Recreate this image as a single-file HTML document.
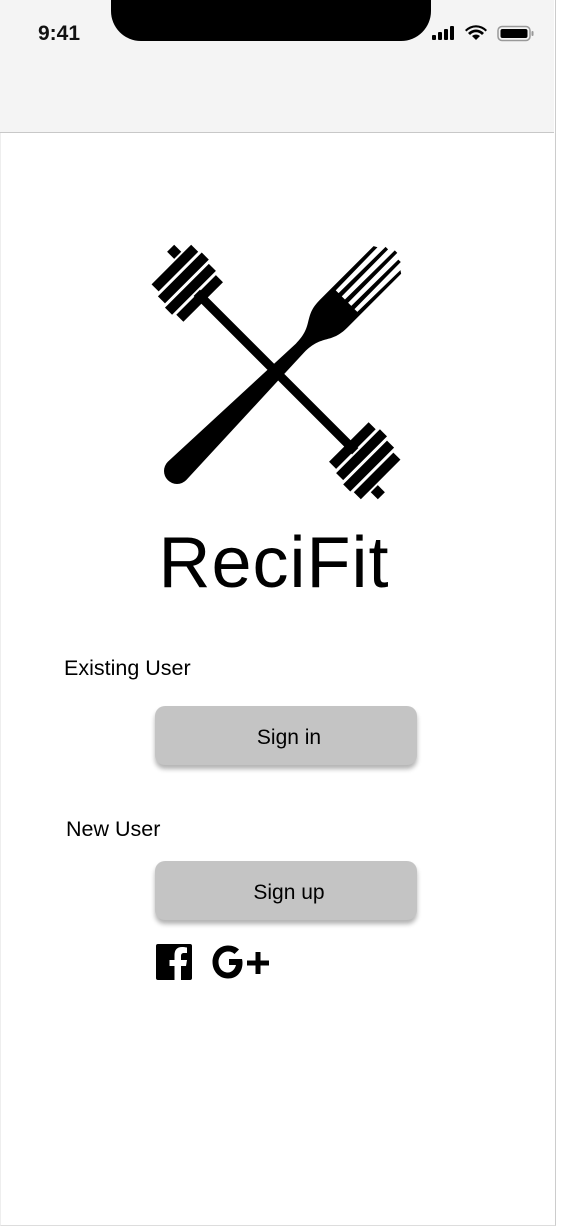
<!DOCTYPE html>
<html><head><meta charset="utf-8"><style>
body{margin:0;width:568px;height:1226px;background:#fff;font-family:"Liberation Sans",sans-serif;position:relative;overflow:hidden}
.frame{position:absolute;left:0;top:0;width:554px;height:1225px;border-right:1px solid #ccc;border-bottom:1px solid #ddd;border-left:1px solid #eee}
.top{position:absolute;left:0;top:0;width:554px;height:132px;background:#f4f4f4;border-bottom:1px solid #c8c8c8}
.notch{position:absolute;left:111px;top:-2px;width:320px;height:43px;background:#000;border-radius:0 0 30px 30px}
.time{position:absolute;left:38px;top:22px;font-size:21px;font-weight:bold;color:#111}
.lbl{position:absolute;font-size:21.5px;color:#000}
.btn{position:absolute;left:155px;width:262px;height:59px;background:#c4c4c4;border-radius:10px;box-shadow:0 4px 5px rgba(0,0,0,.3);font-size:21px;text-align:center;line-height:63px;color:#000;text-indent:6px}
.title{position:absolute;left:0;width:554px;top:522px;text-align:center;font-size:72px;letter-spacing:1px;color:#000;text-indent:-6px}
</style></head><body>
<div class="frame"></div>
<div class="top">
<div class="notch"></div>
<div class="time">9:41</div>
<svg style="position:absolute;left:430px;top:24px" width="105" height="20" viewBox="0 0 105 20">
<rect x="2" y="11" width="4" height="5" rx="1"/><rect x="8" y="8" width="4" height="8" rx="1"/><rect x="14" y="5" width="4" height="11" rx="1"/><rect x="20" y="2" width="4" height="14" rx="1"/>
<path d="M46 16 L42 12 A6 6 0 0 1 50 12 Z"/><path d="M38 9 A11 11 0 0 1 54 9 L52 11 A8 8 0 0 0 40 11 Z"/><path d="M35 6 A15 15 0 0 1 57 6 L55.5 7.5 A13 13 0 0 0 36.5 7.5 Z"/>
<rect x="68" y="2.5" width="32" height="14" rx="4" fill="none" stroke="#999" stroke-width="1.5"/><rect x="70.5" y="5" width="27" height="9" rx="2"/><rect x="101.5" y="7" width="2" height="5" rx="1" fill="#999"/>
</svg>
</div>
<svg style="position:absolute;left:0;top:0" width="568" height="600">
<g transform="translate(276,372) rotate(45)">
<rect x="-112" y="-4.5" width="224" height="9"/>
<rect x="-162" y="-18" width="10" height="10"/>
<rect x="-150" y="-30" width="10" height="56"/><rect x="-137" y="-32" width="10" height="62"/><rect x="-124" y="-29" width="10" height="62"/><rect x="-111" y="-26" width="10" height="56"/>
<rect x="152" y="8" width="10" height="10"/>
<rect x="140" y="-26" width="10" height="56"/><rect x="127" y="-30" width="10" height="62"/><rect x="114" y="-33" width="10" height="62"/><rect x="101" y="-30" width="10" height="56"/>
</g>
<g transform="translate(276,372) rotate(-45)">
<path d="M-140 -13 L34 -6 C60 -6 58 -20 82 -20 L100 -20 L158 -20 L160 -16.5 L100 -15.5 L100 -11.5 L166 -11 L166 -7.5 L100 -7 L100 -2.5 L170 -2 L170 1.5 L100 2 L100 6.5 L166 7 L166 10.5 L100 11 L100 15 L160 16 L158 19 L82 19 C58 19 60 6 34 6 L-140 13 A13 13 0 0 1 -140 -13 Z"/>
</g>
</svg>
<div class="title">ReciFit</div>
<div class="lbl" style="left:64px;top:656px">Existing User</div>
<div class="btn" style="top:706px">Sign in</div>
<div class="lbl" style="left:66px;top:817px">New User</div>
<div class="btn" style="top:861px">Sign up</div>
<svg style="position:absolute;left:156px;top:944px" width="36" height="36" viewBox="0 0 36 36">
<path d="M2 0 H34 A2 2 0 0 1 36 2 V34 A2 2 0 0 1 34 36 H25 V22 H30 L31 16 H25 V12 C25 10 26 9 28 9 H31 V3.5 C29.5 3.3 27.5 3 26 3 C21 3 18.5 6 18.5 11 V16 H13.5 V22 H18.5 V36 H2 A2 2 0 0 1 0 34 V2 A2 2 0 0 1 2 0 Z"/>
</svg>
<svg style="position:absolute;left:212px;top:944px" width="60" height="36" viewBox="0 0 60 36">
<path d="M30 15 H17 V21 H24 C23 25 20 28.5 16 28.5 C10 28.5 6.5 23.5 6.5 18 C6.5 12.5 10.5 7.5 16 7.5 C19 7.5 21 8.5 22.5 10 L27 5.5 C24.5 3 20.5 1.5 16 1.5 C7 1.5 0.5 9 0.5 18 C0.5 27 7 34.5 16 34.5 C25 34.5 30.5 28 30.5 19 C30.5 17.5 30.3 16 30 15 Z"/>
<rect x="43.5" y="8" width="5" height="22"/><rect x="35" y="16.5" width="22" height="5"/>
</svg>
</body></html>
